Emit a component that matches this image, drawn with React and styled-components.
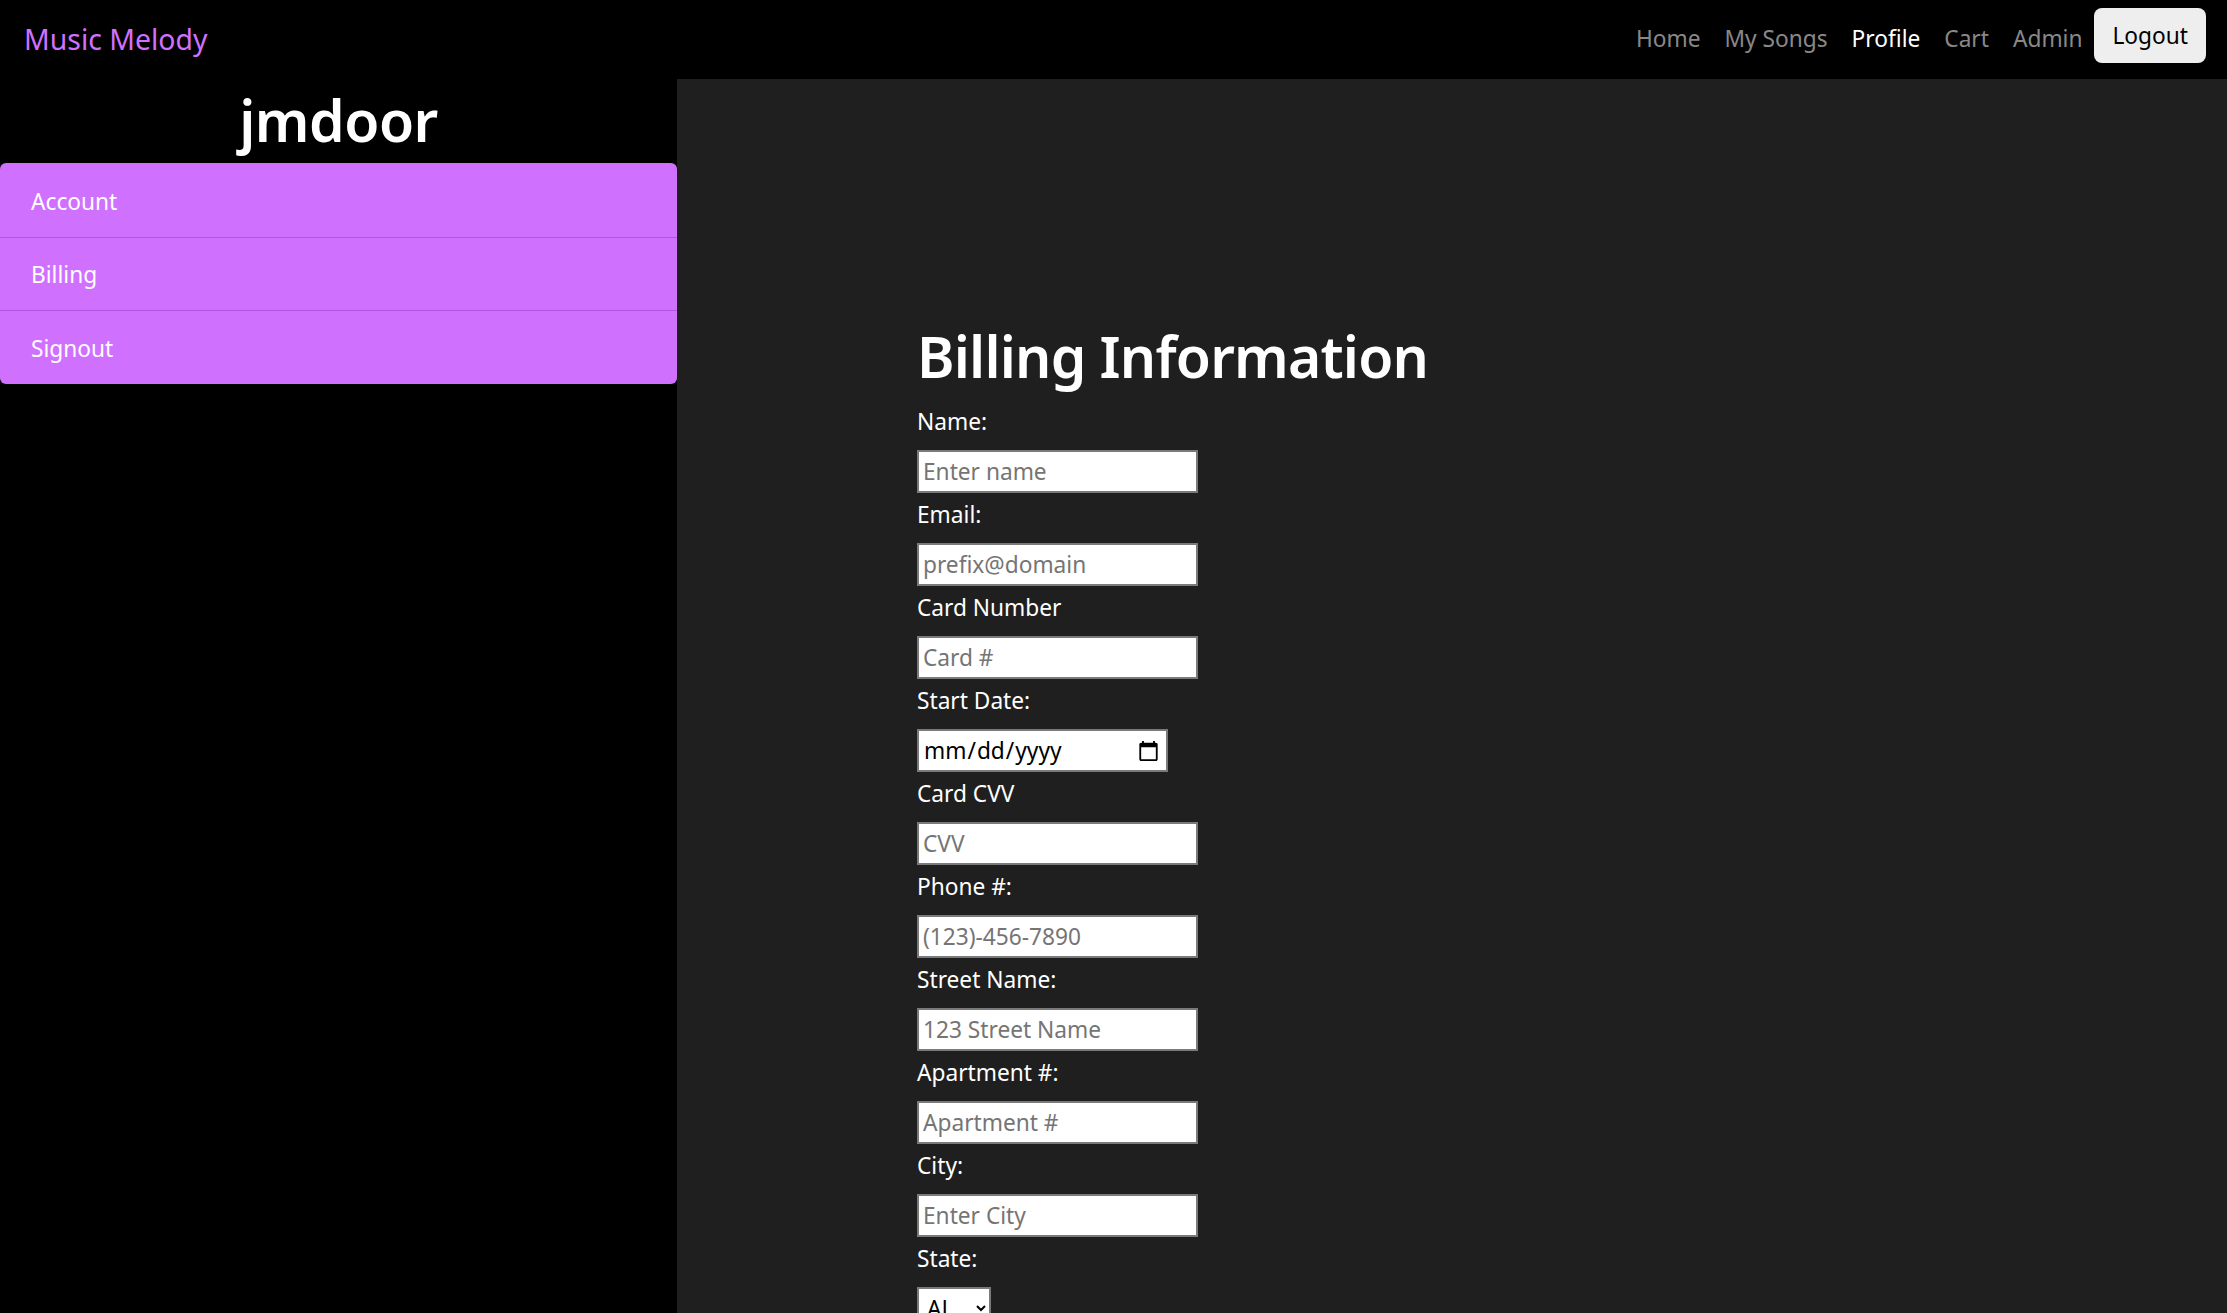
import React from 'react';
import styled, {createGlobalStyle} from 'styled-components';

const GlobalStyle = createGlobalStyle`
  html, body {
    margin: 0;
    padding: 0;
    background: #000;
  }
  body {
    font-family: "Noto Sans", "Open Sans", sans-serif;
    font-size: 22.7px;
    line-height: 1.5;
    color: #fff;
  }
  * {
    box-sizing: border-box;
  }
`;

const Navbar = styled.nav`
  display: flex;
  align-items: center;
  justify-content: space-between;
  height: 79px;
  padding: 0 21px 0 24px;
  background: #000;
`;

const Brand = styled.a`
  color: #d070ff;
  font-size: 28.4px;
  text-decoration: none;
`;

const NavLinks = styled.div`
  display: flex;
  align-items: center;
`;

const NavLink = styled.a`
  color: ${props => (props.active ? '#fff' : 'rgba(255, 255, 255, 0.55)')};
  padding: 11px 12px;
  text-decoration: none;
`;

const LogoutButton = styled.button`
  height: 55px;
  margin-bottom: 8px;
  padding: 0 18px;
  background: #eeeeee;
  color: #000;
  border: none;
  border-radius: 8px;
  font-family: inherit;
  font-size: 22.7px;
`;

const Layout = styled.div`
  display: grid;
  grid-template-columns: 677px 1fr;
  min-height: calc(100vh - 79px);
`;

const Sidebar = styled.aside`
  background: #000;
`;

const UserName = styled.h1`
  margin: 0;
  height: 84px;
  display: flex;
  align-items: center;
  justify-content: center;
  font-size: 57px;
  font-weight: 600;
  letter-spacing: -0.5px;
`;

const Menu = styled.div`
  display: flex;
  flex-direction: column;
  background: #d070ff;
  border-radius: 6px;
  overflow: hidden;
`;

const MenuItem = styled.a`
  display: flex;
  align-items: center;
  height: 73.5px;
  padding: 3px 0 0 31px;
  color: #fff;
  text-decoration: none;
  border-top: 1px solid ${props => (props.first ? 'transparent' : 'rgba(120, 40, 160, 0.35)')};
`;

const Content = styled.main`
  background: #1f1f1f;
  padding: 243px 0 0 240px;
`;

const Form = styled.form`
  display: flex;
  flex-direction: column;
  align-items: flex-start;
`;

const Title = styled.h1`
  margin: 0 0 15px;
  font-size: 57px;
  font-weight: 600;
  line-height: 1.2;
  letter-spacing: -0.8px;
`;

const Label = styled.label`
  display: block;
  margin-bottom: 11px;
  line-height: 34px;
`;

const Input = styled.input`
  display: block;
  width: ${props => props.width || 281}px;
  height: 43px;
  margin-bottom: 5px;
  padding: 0 4px;
  border: 2px solid #7a7a7a;
  background: #fff;
  color: #000;
  font-family: inherit;
  font-size: 22.7px;
  &::placeholder {
    color: #757575;
  }
`;

const Select = styled.select`
  display: block;
  width: 74px;
  height: 43px;
  padding: 0 4px;
  border: 2px solid #7a7a7a;
  background: #fff;
  color: #000;
  font-family: inherit;
  font-size: 22.7px;
`;

const fields = [
  {label: 'Name:', placeholder: 'Enter name'},
  {label: 'Email:', placeholder: 'prefix@domain'},
  {label: 'Card Number', placeholder: 'Card #'},
  {label: 'Start Date:', type: 'date', width: 251},
  {label: 'Card CVV', placeholder: 'CVV'},
  {label: 'Phone #:', placeholder: '(123)-456-7890'},
  {label: 'Street Name:', placeholder: '123 Street Name'},
  {label: 'Apartment #:', placeholder: 'Apartment #'},
  {label: 'City:', placeholder: 'Enter City'},
];

const App = () => {
  return (
    <>
      <GlobalStyle />
      <Navbar>
        <Brand href="#">Music Melody</Brand>
        <NavLinks>
          <NavLink href="#">Home</NavLink>
          <NavLink href="#">My Songs</NavLink>
          <NavLink href="#" active>Profile</NavLink>
          <NavLink href="#">Cart</NavLink>
          <NavLink href="#">Admin</NavLink>
          <LogoutButton>Logout</LogoutButton>
        </NavLinks>
      </Navbar>
      <Layout>
        <Sidebar>
          <UserName>jmdoor</UserName>
          <Menu>
            <MenuItem href="#" first>Account</MenuItem>
            <MenuItem href="#">Billing</MenuItem>
            <MenuItem href="#">Signout</MenuItem>
          </Menu>
        </Sidebar>
        <Content>
          <Form>
            <Title>Billing Information</Title>
            {fields.map(f => (
              <div key={f.label}>
                <Label>{f.label}</Label>
                <Input type={f.type || 'text'} placeholder={f.placeholder} width={f.width} />
              </div>
            ))}
            <div>
              <Label>State:</Label>
              <Select defaultValue="AL">
                <option value="AL">AL</option>
                <option value="AK">AK</option>
              </Select>
            </div>
          </Form>
        </Content>
      </Layout>
    </>
  );
};

export default App;
